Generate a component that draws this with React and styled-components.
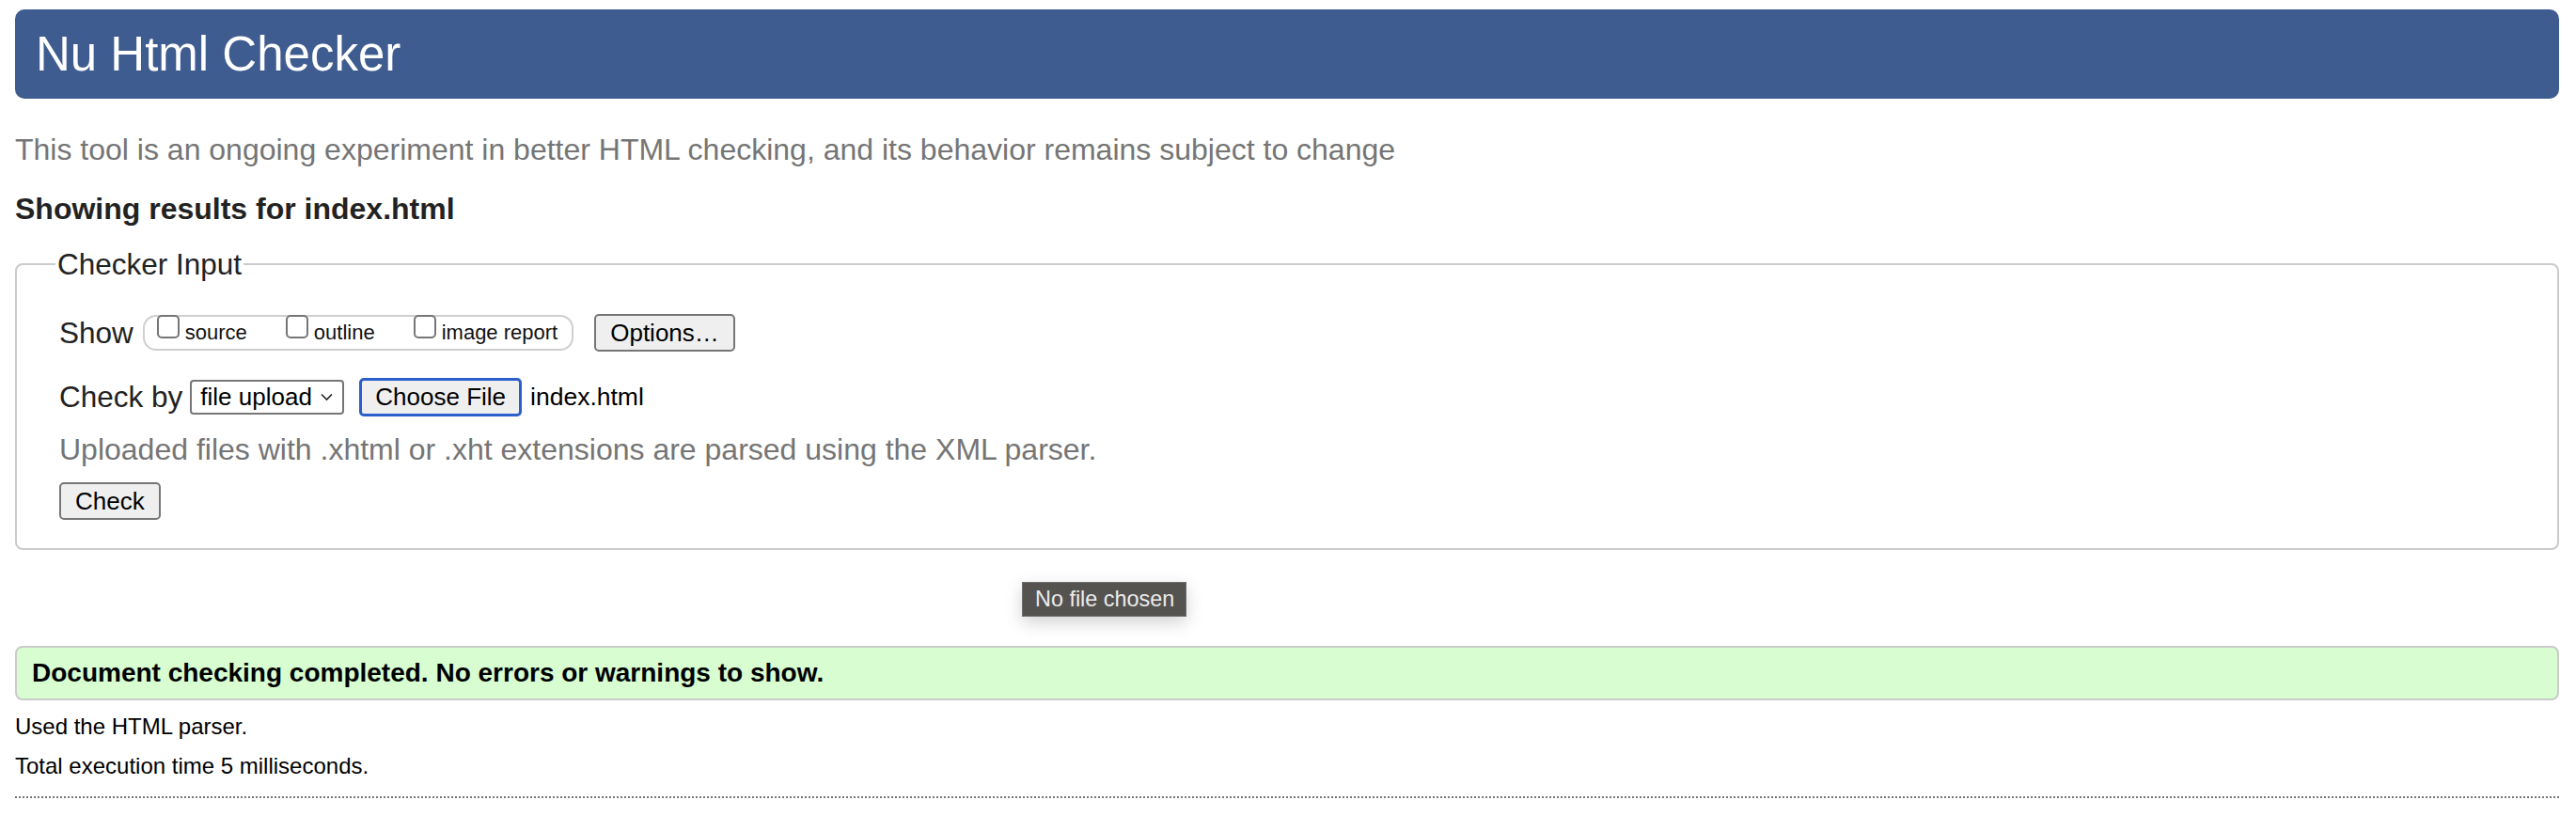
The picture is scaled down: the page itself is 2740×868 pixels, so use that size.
import React from 'react'
import styled, { createGlobalStyle } from 'styled-components'

const GlobalStyle = createGlobalStyle`
  html, body {
    margin: 0;
    padding: 0;
    background: #fff;
  }
  body {
    font-family: "Liberation Sans", Arial, Helvetica, sans-serif;
    color: #222;
  }
`

const Page = styled.div`
  position: relative;
  padding: 10px 18px 0 16px;
`

const Header = styled.h1`
  margin: 0;
  height: 95px;
  display: flex;
  align-items: center;
  padding-left: 22px;
  background: #3e5c8f;
  border-radius: 10px;
  color: #fff;
  font-weight: 400;
  font-size: 51px;
`

const Intro = styled.p`
  margin: 0;
  padding-top: 36px;
  font-size: 32px;
  line-height: 36px;
  color: #757575;
`

const ResultsFor = styled.h2`
  margin: 0;
  padding-top: 27px;
  font-size: 32px;
  line-height: 36px;
  font-weight: 700;
  color: #222;
`

const Fieldset = styled.fieldset`
  margin: 23px 0 0;
  padding: 0 0 30px 45px;
  border: 2px solid #cbcbcb;
  border-radius: 8px;
  min-inline-size: auto;
`

const Legend = styled.legend`
  padding: 0 2px;
  margin-left: -4px;
  font-size: 31.5px;
  line-height: 36px;
  color: #222;
`

const Row = styled.div`
  display: flex;
  align-items: center;
  margin-top: ${p => p.$top || 0}px;
`

const Label = styled.span`
  font-size: 31.5px;
  color: #222;
  margin-right: ${p => p.$gap || 10}px;
`

const CheckGroup = styled.span`
  display: inline-flex;
  align-items: center;
  height: 38px;
  box-sizing: border-box;
  padding: 0 15px 0 13px;
  border: 2px solid #cfcfcf;
  border-radius: 14px;
`

const CheckItem = styled.label`
  display: inline-flex;
  align-items: flex-start;
  margin-right: ${p => p.$last ? 0 : 41}px;
  font-size: 22px;
  color: #111;
`

const Box = styled.span`
  display: inline-block;
  width: 24px;
  height: 25px;
  box-sizing: border-box;
  border: 2px solid #767676;
  border-radius: 5px;
  background: #fff;
  margin-right: 6px;
  margin-top: -6px;
`

const Button = styled.span`
  display: inline-flex;
  align-items: center;
  justify-content: center;
  box-sizing: border-box;
  height: ${p => p.$h || 40}px;
  padding: 0 ${p => p.$pad || 14}px;
  margin-left: ${p => p.$left || 0}px;
  background: #efefef;
  border: ${p => p.$focus ? '3px solid #2b5fcb' : '2px solid #767676'};
  border-radius: 5px;
  font-size: 26px;
  color: #000;
`

const Select = styled.span`
  display: inline-flex;
  align-items: center;
  justify-content: space-between;
  box-sizing: border-box;
  height: 37px;
  width: 164px;
  padding: 0 10px 0 9px;
  margin-left: 1px;
  background: #fff;
  border: 2px solid #767676;
  border-radius: 4px;
  font-size: 26px;
  color: #000;
`

const FileName = styled.span`
  font-size: 26.5px;
  color: #000;
  margin-left: 9px;
`

const Hint = styled.p`
  margin: 0;
  padding-top: 15px;
  font-size: 32px;
  line-height: 40px;
  color: #757575;
`

const Tooltip = styled.div`
  position: absolute;
  left: 1087px;
  top: 619px;
  height: 37px;
  box-sizing: border-box;
  padding: 0 12px 0 13px;
  display: flex;
  align-items: center;
  background: #555350;
  border: 1px solid #6e6e6e;
  color: #ececec;
  font-size: 23.4px;
  box-shadow: 0 6px 18px rgba(0, 0, 0, 0.18);
`

const Success = styled.div`
  margin-top: 102px;
  height: 58px;
  box-sizing: border-box;
  display: flex;
  align-items: center;
  padding-left: 16px;
  background: #d7fdd0;
  border: 2px solid #cbcbcb;
  border-radius: 8px;
  font-size: 28px;
  font-weight: 700;
  color: #000;
`

const Note = styled.p`
  margin: 0;
  padding-top: ${p => p.$top}px;
  font-size: 24px;
  line-height: 28px;
  color: #000;
`

const Divider = styled.hr`
  margin: 18px 0 0;
  border: 0;
  border-top: 2px dotted #777;
`

const Chevron = () => (
  <svg width="13" height="9" viewBox="0 0 13 9" fill="none">
    <path d="M1 1.5l5.5 5.5 5.5-5.5" stroke="#222" strokeWidth="1.6" />
  </svg>
)

const checks = ['source', 'outline', 'image report']

export default function App() {
  return (
    <>
      <GlobalStyle />
      <Page>
        <Header>Nu Html Checker</Header>
        <Intro>This tool is an ongoing experiment in better HTML checking, and its behavior remains subject to change</Intro>
        <ResultsFor>Showing results for index.html</ResultsFor>
        <Fieldset>
          <Legend>Checker Input</Legend>
          <Row $top={35}>
            <Label>Show</Label>
            <CheckGroup>
              {checks.map((c, i) => (
                <CheckItem key={c} $last={i === checks.length - 1}>
                  <Box />
                  {c}
                </CheckItem>
              ))}
            </CheckGroup>
            <Button $pad={15} $left={22}>Options…</Button>
          </Row>
          <Row $top={28}>
            <Label $gap={7}>Check by</Label>
            <Select>file upload <Chevron /></Select>
            <Button $focus $h={41} $pad={14} $left={16}>Choose File</Button>
            <FileName>index.html</FileName>
          </Row>
          <Hint>Uploaded files with .xhtml or .xht extensions are parsed using the XML parser.</Hint>
          <Row $top={15}>
            <Button $pad={15}>Check</Button>
          </Row>
        </Fieldset>
        <Tooltip>No file chosen</Tooltip>
        <Success>Document checking completed. No errors or warnings to show.</Success>
        <Note $top={14}>Used the HTML parser.</Note>
        <Note $top={14}>Total execution time 5 milliseconds.</Note>
        <Divider />
      </Page>
    </>
  )
}
